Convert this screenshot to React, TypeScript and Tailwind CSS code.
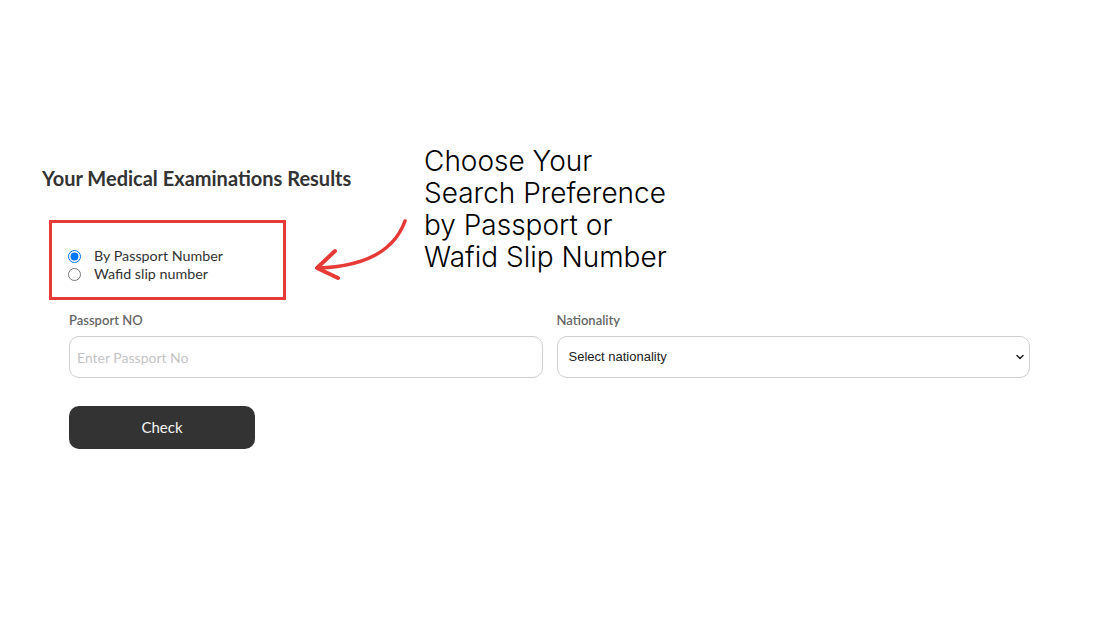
import { ChevronDown } from "lucide-react";

export default function App() {
  return (
    <div className="relative h-[620px] w-[1100px] overflow-hidden bg-white font-['Lato','Liberation_Sans',sans-serif] text-[#333]">
      <div className="pl-[42px] pt-[165px]">
        <h2 className="text-[20px] font-bold leading-[26px] text-[#333]">
          Your Medical Examinations Results
        </h2>

        {/* highlighted radio group */}
        <div className="ml-[7px] mt-[29px] h-[80px] w-[237px] border-[3px] border-[#e63a36] pl-[16px] pt-[24px]">
          <label className="flex h-[18px] items-center gap-[13px] text-[14.3px] text-[#333]">
            <input type="radio" name="by" defaultChecked className="m-0 size-[13px] accent-[#0075ff]" />
            <span>By Passport Number</span>
          </label>
          <label className="flex h-[18px] items-center gap-[13px] text-[14.3px] text-[#333]">
            <input type="radio" name="by" className="m-0 size-[13px]" />
            <span>Wafid slip number</span>
          </label>
        </div>

        <div className="ml-[27px] mt-[12px] grid w-[961px] grid-cols-2 gap-[14px]">
          <div>
            <label className="block text-[13px] font-semibold leading-[16px] text-[#666]">Passport NO</label>
            <input
              placeholder="Enter Passport No"
              className="mt-[8px] h-[42px] w-full rounded-[10px] border border-[#cfcfcf] bg-white px-[7px] text-[14px] text-[#333] placeholder:text-[#c4c4c4] focus:outline-none"
            />
          </div>
          <div>
            <label className="block text-[13px] font-semibold leading-[16px] text-[#666]">Nationality</label>
            <div className="relative mt-[8px]">
              <select className="h-[42px] w-full appearance-none rounded-[10px] border border-[#cfcfcf] bg-white px-[11px] font-['Liberation_Sans',Arial,sans-serif] text-[13px] text-[#222] focus:outline-none">
                <option>Select nationality</option>
              </select>
              <ChevronDown className="pointer-events-none absolute right-[4px] top-[15px] size-[12px] text-[#222]" strokeWidth={3} />
            </div>
          </div>
        </div>

        <button className="ml-[27px] mt-[28px] h-[43px] w-[186px] rounded-[10px] bg-[#333] text-[15px] text-[#f4f4f4]">
          Check
        </button>
      </div>

      {/* annotation */}
      <div className="absolute left-[424px] top-[145px] font-['Inter',sans-serif] text-[28px] font-light leading-[32px] text-black">
        <p>Choose Your</p>
        <p>Search Preference</p>
        <p>by Passport or</p>
        <p>Wafid Slip Number</p>
      </div>

      <svg className="absolute left-0 top-0" width="1100" height="620" viewBox="0 0 1100 620" fill="none">
        <path d="M405 221 C396 246 372 266 319 268" stroke="#e63a36" strokeWidth="3.5" strokeLinecap="round" />
        <path d="M335 251 L317 268 L338 278" stroke="#e63a36" strokeWidth="4" strokeLinecap="round" strokeLinejoin="round" />
      </svg>
    </div>
  );
}
